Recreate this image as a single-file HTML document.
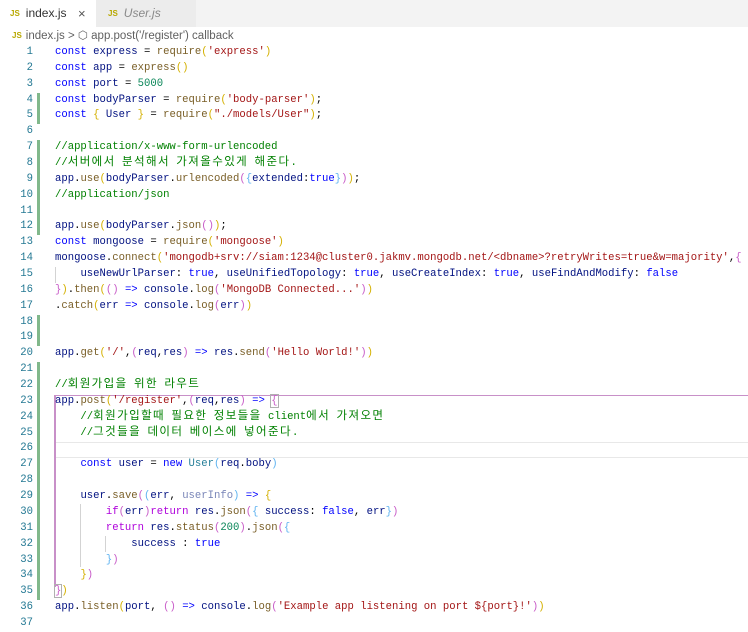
<!DOCTYPE html>
<html><head><meta charset="utf-8"><style>
*{margin:0;padding:0;box-sizing:border-box}
body{width:748px;height:627px;background:#fff;position:relative;overflow:hidden;font-family:"Liberation Sans",sans-serif}
.tabs{position:absolute;left:0;top:0;width:748px;height:27px;background:#f3f3f3}
.tab{position:absolute;top:0;height:27px;font-size:12px;line-height:27px}
.js{font-size:8px;font-weight:bold;color:#b8a800;margin-right:6px;vertical-align:1px}
.bc{position:absolute;left:12px;top:28px;height:16px;font-size:11.5px;line-height:16px;color:#616161}
.code{position:absolute;left:0;top:45px;width:748px}
.ln{height:15.86px;line-height:15.86px;font-family:"Liberation Mono",monospace;font-size:10.6px;white-space:pre;position:relative}
.n{position:absolute;left:0;width:33px;text-align:right;color:#237893}
.t{position:absolute;left:55px;color:#000}
.k{font-family:"Noto Sans CJK KR",sans-serif;font-size:11.5px;letter-spacing:1.4px;line-height:0}
.bar{position:absolute;left:37px;width:3px;background:#81b88b}
.c{color:#008000}.b{color:#0000ff}.v{color:#001080}.s{color:#a31515}.f{color:#795e26}.m{color:#098658}.p{color:#af00db}
.g1{color:#d4b000}.g2{color:#c85cc8}.g3{color:#5fb3f0}
.ig{position:absolute;width:1px;background:#d3d3d3}
</style></head><body>
<div class="tabs">
 <div class="tab" style="left:0;width:96px;background:#fff;padding-left:10px;color:#333"><span class="js">JS</span>index.js<span style="position:absolute;left:78px;color:#555;font-size:13px">×</span></div>
 <div class="tab" style="left:96px;width:100px;background:#ececec;padding-left:12px;color:#888;font-style:italic"><span class="js" style="font-style:normal">JS</span>User.js</div>
</div>
<div class="bc"><span class="js" style="margin-right:4px">JS</span>index.js &gt; <span style="color:#666">⬡</span> app.post('/register') callback</div>

<div class="bar" style="top:92.6px;height:31.7px"></div>
<div class="bar" style="top:140.2px;height:95.2px"></div>
<div class="bar" style="top:314.7px;height:31.7px"></div>
<div class="bar" style="top:362.3px;height:237.9px"></div>
<div class="ig" style="left:55px;top:267px;height:16px"></div>
<div class="ig" style="left:80px;top:504px;height:63px"></div>
<div class="ig" style="left:105px;top:536px;height:16px"></div>
<div style="position:absolute;left:54px;top:395px;width:2px;height:192px;background:#c890c8"></div>
<div style="position:absolute;left:54px;top:394.5px;width:694px;height:1px;background:#c890c8"></div>
<div style="position:absolute;left:56px;top:442px;width:692px;height:16px;border-top:1px solid #e8e8e8;border-bottom:1px solid #e8e8e8"></div>

<div class="code">
<div class="ln"><span class="n">1</span><span class="t"><span class="b">const</span> <span class="v">express</span> = <span class="f">require</span><span class="g1">(</span><span class="s">'express'</span><span class="g1">)</span></span></div>
<div class="ln"><span class="n">2</span><span class="t"><span class="b">const</span> <span class="v">app</span> = <span class="f">express</span><span class="g1">()</span></span></div>
<div class="ln"><span class="n">3</span><span class="t"><span class="b">const</span> <span class="v">port</span> = <span class="m">5000</span></span></div>
<div class="ln"><span class="n">4</span><span class="t"><span class="b">const</span> <span class="v">bodyParser</span> = <span class="f">require</span><span class="g1">(</span><span class="s">'body-parser'</span><span class="g1">)</span>;</span></div>
<div class="ln"><span class="n">5</span><span class="t"><span class="b">const</span> <span class="g1">{</span> <span class="v">User</span> <span class="g1">}</span> = <span class="f">require</span><span class="g1">(</span><span class="s">"./models/User"</span><span class="g1">)</span>;</span></div>
<div class="ln"><span class="n">6</span></div>
<div class="ln"><span class="n">7</span><span class="t c">//application/x-www-form-urlencoded</span></div>
<div class="ln"><span class="n">8</span><span class="t c">//<span class="k">서버에서</span> <span class="k">분석해서</span> <span class="k">가져올수있게</span> <span class="k">해준다</span>.</span></div>
<div class="ln"><span class="n">9</span><span class="t"><span class="v">app</span>.<span class="f">use</span><span class="g1">(</span><span class="v">bodyParser</span>.<span class="f">urlencoded</span><span class="g2">(</span><span class="g3">{</span><span class="v">extended</span>:<span class="b">true</span><span class="g3">}</span><span class="g2">)</span><span class="g1">)</span>;</span></div>
<div class="ln"><span class="n">10</span><span class="t c">//application/json</span></div>
<div class="ln"><span class="n">11</span></div>
<div class="ln"><span class="n">12</span><span class="t"><span class="v">app</span>.<span class="f">use</span><span class="g1">(</span><span class="v">bodyParser</span>.<span class="f">json</span><span class="g2">()</span><span class="g1">)</span>;</span></div>
<div class="ln"><span class="n">13</span><span class="t"><span class="b">const</span> <span class="v">mongoose</span> = <span class="f">require</span><span class="g1">(</span><span class="s">'mongoose'</span><span class="g1">)</span></span></div>
<div class="ln"><span class="n">14</span><span class="t"><span class="v">mongoose</span>.<span class="f">connect</span><span class="g1">(</span><span class="s">'mongodb+srv://siam:1234@cluster0.jakmv.mongodb.net/&lt;dbname&gt;?retryWrites=true&amp;w=majority'</span>,<span class="g2">{</span></span></div>
<div class="ln"><span class="n">15</span><span class="t">    <span class="v">useNewUrlParser</span>: <span class="b">true</span>, <span class="v">useUnifiedTopology</span>: <span class="b">true</span>, <span class="v">useCreateIndex</span>: <span class="b">true</span>, <span class="v">useFindAndModify</span>: <span class="b">false</span></span></div>
<div class="ln"><span class="n">16</span><span class="t"><span class="g2">}</span><span class="g1">)</span>.<span class="f">then</span><span class="g1">(</span><span class="g2">()</span> <span class="b">=&gt;</span> <span class="v">console</span>.<span class="f">log</span><span class="g2">(</span><span class="s">'MongoDB Connected...'</span><span class="g2">)</span><span class="g1">)</span></span></div>
<div class="ln"><span class="n">17</span><span class="t">.<span class="f">catch</span><span class="g1">(</span><span class="v">err</span> <span class="b">=&gt;</span> <span class="v">console</span>.<span class="f">log</span><span class="g2">(</span><span class="v">err</span><span class="g2">)</span><span class="g1">)</span></span></div>
<div class="ln"><span class="n">18</span></div>
<div class="ln"><span class="n">19</span></div>
<div class="ln"><span class="n">20</span><span class="t"><span class="v">app</span>.<span class="f">get</span><span class="g1">(</span><span class="s">'/'</span>,<span class="g2">(</span><span class="v">req</span>,<span class="v">res</span><span class="g2">)</span> <span class="b">=&gt;</span> <span class="v">res</span>.<span class="f">send</span><span class="g2">(</span><span class="s">'Hello World!'</span><span class="g2">)</span><span class="g1">)</span></span></div>
<div class="ln"><span class="n">21</span></div>
<div class="ln"><span class="n">22</span><span class="t c">//<span class="k">회원가입을</span> <span class="k">위한</span> <span class="k">라우트</span></span></div>
<div class="ln"><span class="n">23</span><span class="t"><span class="v">app</span>.<span class="f">post</span><span class="g1">(</span><span class="s">'/register'</span>,<span class="g2">(</span><span class="v">req</span>,<span class="v">res</span><span class="g2">)</span> <span class="b">=&gt;</span> <span class="g2" style="outline:1px solid #b0b0b0">{</span></span></div>
<div class="ln"><span class="n">24</span><span class="t c">    //<span class="k">회원가입할때</span> <span class="k">필요한</span> <span class="k">정보들을</span> client<span class="k">에서</span> <span class="k">가져오면</span></span></div>
<div class="ln"><span class="n">25</span><span class="t c">    //<span class="k">그것들을</span> <span class="k">데이터</span> <span class="k">베이스에</span> <span class="k">넣어준다</span>.</span></div>
<div class="ln"><span class="n">26</span></div>
<div class="ln"><span class="n">27</span><span class="t">    <span class="b">const</span> <span class="v">user</span> = <span class="b">new</span> <span class="f" style="color:#267f99">User</span><span class="g3">(</span><span class="v">req</span>.<span class="v">boby</span><span class="g3">)</span></span></div>
<div class="ln"><span class="n">28</span></div>
<div class="ln"><span class="n">29</span><span class="t">    <span class="v">user</span>.<span class="f">save</span><span class="g2">(</span><span class="g3">(</span><span class="v">err</span>, <span style="color:#7a86b8">userInfo</span><span class="g3">)</span> <span class="b">=&gt;</span> <span class="g1">{</span></span></div>
<div class="ln"><span class="n">30</span><span class="t">        <span class="p">if</span><span class="g2">(</span><span class="v">err</span><span class="g2">)</span><span class="p">return</span> <span class="v">res</span>.<span class="f">json</span><span class="g2">(</span><span class="g3">{</span> <span class="v">success</span>: <span class="b">false</span>, <span class="v">err</span><span class="g3">}</span><span class="g2">)</span></span></div>
<div class="ln"><span class="n">31</span><span class="t">        <span class="p">return</span> <span class="v">res</span>.<span class="f">status</span><span class="g2">(</span><span class="m">200</span><span class="g2">)</span>.<span class="f">json</span><span class="g2">(</span><span class="g3">{</span></span></div>
<div class="ln"><span class="n">32</span><span class="t">            <span class="v">success</span> : <span class="b">true</span></span></div>
<div class="ln"><span class="n">33</span><span class="t">        <span class="g3">}</span><span class="g2">)</span></span></div>
<div class="ln"><span class="n">34</span><span class="t">    <span class="g1">}</span><span class="g2">)</span></span></div>
<div class="ln"><span class="n">35</span><span class="t"><span class="g2" style="outline:1px solid #b0b0b0">}</span><span class="g1">)</span></span></div>
<div class="ln"><span class="n">36</span><span class="t"><span class="v">app</span>.<span class="f">listen</span><span class="g1">(</span><span class="v">port</span>, <span class="g2">()</span> <span class="b">=&gt;</span> <span class="v">console</span>.<span class="f">log</span><span class="g2">(</span><span class="s">'Example app listening on port ${port}!'</span><span class="g2">)</span><span class="g1">)</span></span></div>
<div class="ln"><span class="n">37</span></div>
</div>
</body></html>
